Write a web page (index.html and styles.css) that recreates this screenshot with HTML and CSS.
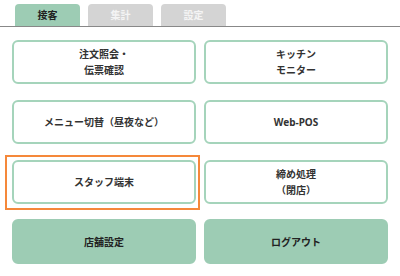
FILE: index.html
```html
<!DOCTYPE html>
<html lang="ja">
<head>
    <meta charset="UTF-8">
    <meta name="viewport" content="width=device-width, initial-scale=1.0">
    <title>メニュー</title>
    <link rel="stylesheet" href="styles.css">
</head>
<body>

<div class="tabs">
    <div class="tab tab-active">接客</div>
    <div class="tab">集計</div>
    <div class="tab">設定</div>
</div>

<div class="menu">
    <button class="btn">注文照会・<br>伝票確認</button>
    <button class="btn">キッチン<br>モニター</button>
    <button class="btn">メニュー切替（昼夜など）</button>
    <button class="btn">Web-POS</button>
    <button class="btn btn-focus">スタッフ端末</button>
    <button class="btn">締め処理<br>（閉店）</button>
    <button class="btn btn-fill">店舗設定</button>
    <button class="btn btn-fill">ログアウト</button>
</div>

</body>
</html>
```

FILE: styles.css
```css
* {
    box-sizing: border-box;
}

body {
    margin: 0;
    background: #fff;
    font-family: "Noto Sans", "Noto Sans CJK JP", sans-serif;
    color: #333;
}

.tabs {
    display: flex;
    gap: 8px;
    padding: 4px 0 0 15px;
    border-bottom: 1px solid #888;
}

.tab {
    width: 65px;
    height: 22px;
    line-height: 22px;
    text-align: center;
    font-size: 10px;
    font-weight: 700;
    background-color: #d4d4d4;
    color: #f4f4f4;
    border-radius: 4px 4px 0 0;
}

.tab-active {
    background-color: #9dccb4;
    color: #222;
}

.menu {
    display: grid;
    grid-template-columns: 1fr 1fr;
    grid-auto-rows: 44px;
    column-gap: 8px;
    row-gap: 16px;
    padding: 0 12px;
    margin-top: 13px;
}

.btn {
    position: relative;
    font-family: inherit;
    font-size: 10px;
    font-weight: 700;
    line-height: 16px;
    color: #333;
    background: #fff;
    border: 2px solid #a5d4bb;
    border-radius: 6px;
    padding: 0;
}

.btn-fill {
    background-color: #9dccb4;
    border-color: #9dccb4;
    color: #222;
    height: 45px;
    margin-top: -1px;
}

/* foco do teclado */
.btn-focus::after {
    content: "";
    position: absolute;
    top: -7px;
    bottom: -8px;
    left: -9px;
    right: -6px;
    border: 2px solid #f5883a;
}
```
